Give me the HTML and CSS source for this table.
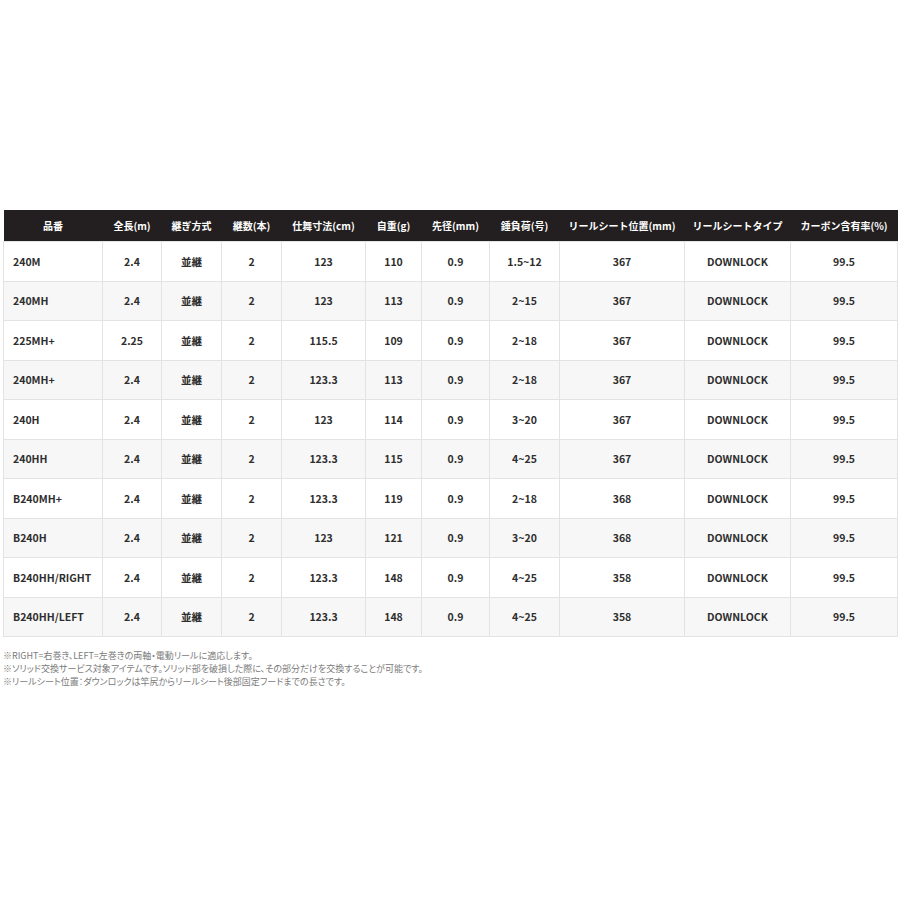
FILE: index.html
```html
<!DOCTYPE html>
<html lang="ja">
<head>
<meta charset="utf-8">
<link rel="stylesheet" href="styles.css">
</head>
<body>
<div class="wrap">
<table class="spec">
<colgroup>
<col class="c1"><col class="c2"><col class="c3"><col class="c4"><col class="c5"><col class="c6"><col class="c7"><col class="c8"><col class="c9"><col class="c10"><col class="c11">
</colgroup>
<thead>
<tr><th>品番</th><th>全長(m)</th><th>継ぎ方式</th><th>継数(本)</th><th>仕舞寸法(cm)</th><th>自重(g)</th><th>先径(mm)</th><th>錘負荷(号)</th><th>リールシート位置(mm)</th><th>リールシートタイプ</th><th>カーボン含有率(%)</th></tr>
</thead>
<tbody>
<tr><td class="name">240M</td><td>2.4</td><td>並継</td><td>2</td><td>123</td><td>110</td><td>0.9</td><td>1.5~12</td><td>367</td><td>DOWNLOCK</td><td>99.5</td></tr>
<tr><td class="name">240MH</td><td>2.4</td><td>並継</td><td>2</td><td>123</td><td>113</td><td>0.9</td><td>2~15</td><td>367</td><td>DOWNLOCK</td><td>99.5</td></tr>
<tr><td class="name">225MH+</td><td>2.25</td><td>並継</td><td>2</td><td>115.5</td><td>109</td><td>0.9</td><td>2~18</td><td>367</td><td>DOWNLOCK</td><td>99.5</td></tr>
<tr><td class="name">240MH+</td><td>2.4</td><td>並継</td><td>2</td><td>123.3</td><td>113</td><td>0.9</td><td>2~18</td><td>367</td><td>DOWNLOCK</td><td>99.5</td></tr>
<tr><td class="name">240H</td><td>2.4</td><td>並継</td><td>2</td><td>123</td><td>114</td><td>0.9</td><td>3~20</td><td>367</td><td>DOWNLOCK</td><td>99.5</td></tr>
<tr><td class="name">240HH</td><td>2.4</td><td>並継</td><td>2</td><td>123.3</td><td>115</td><td>0.9</td><td>4~25</td><td>367</td><td>DOWNLOCK</td><td>99.5</td></tr>
<tr><td class="name">B240MH+</td><td>2.4</td><td>並継</td><td>2</td><td>123.3</td><td>119</td><td>0.9</td><td>2~18</td><td>368</td><td>DOWNLOCK</td><td>99.5</td></tr>
<tr><td class="name">B240H</td><td>2.4</td><td>並継</td><td>2</td><td>123</td><td>121</td><td>0.9</td><td>3~20</td><td>368</td><td>DOWNLOCK</td><td>99.5</td></tr>
<tr><td class="name">B240HH/RIGHT</td><td>2.4</td><td>並継</td><td>2</td><td>123.3</td><td>148</td><td>0.9</td><td>4~25</td><td>358</td><td>DOWNLOCK</td><td>99.5</td></tr>
<tr><td class="name">B240HH/LEFT</td><td>2.4</td><td>並継</td><td>2</td><td>123.3</td><td>148</td><td>0.9</td><td>4~25</td><td>358</td><td>DOWNLOCK</td><td>99.5</td></tr>
</tbody>
</table>
<div class="notes">
<p>※RIGHT=右巻き、LEFT=左巻きの両軸・電動リールに適応します。</p>
<p>※ソリッド交換サービス対象アイテムです。ソリッド部を破損した際に、その部分だけを交換することが可能です。</p>
<p>※リールシート位置：ダウンロックは竿尻からリールシート後部固定フードまでの長さです。</p>
</div>
</div>
</body>
</html>
```
FILE: styles.css
```css
html, body {
  margin: 0;
  padding: 0;
  background: #ffffff;
}
body {
  font-family: "Noto Sans CJK JP", "Noto Sans", sans-serif;
}
.wrap {
  padding: 210px 3px 0 3px;
}
.spec {
  width: 894px;
  border-collapse: collapse;
  table-layout: fixed;
  font-size: 10.5px;
  font-weight: 700;
}
.c1 { width: 99px; }
.c2 { width: 59px; }
.c3 { width: 60px; }
.c4 { width: 60px; }
.c5 { width: 84px; }
.c6 { width: 56px; }
.c7 { width: 68px; }
.c8 { width: 70px; }
.c9 { width: 125px; }
.c10 { width: 106px; }
.c11 { width: 107px; }
.spec th {
  background: #231f20;
  color: #ffffff;
  height: 31px;
  padding: 0;
  font-size: 10px;
  font-weight: 700;
  text-align: center;
  white-space: nowrap;
  border: 0;
}
.spec td {
  height: 38.5px;
  padding: 0;
  text-align: center;
  color: #2e2e2e;
  border: 1px solid #e3e3e3;
  white-space: nowrap;
}
.spec tbody tr:nth-child(even) td {
  background: #f7f7f7;
}
.spec td.name {
  text-align: left;
  padding-left: 9px;
}
.notes {
  margin-top: 12px;
  color: #7a7a7a;
  font-size: 9px;
  line-height: 13px;
  font-feature-settings: "palt";
}
.notes p {
  margin: 0;
}
```
